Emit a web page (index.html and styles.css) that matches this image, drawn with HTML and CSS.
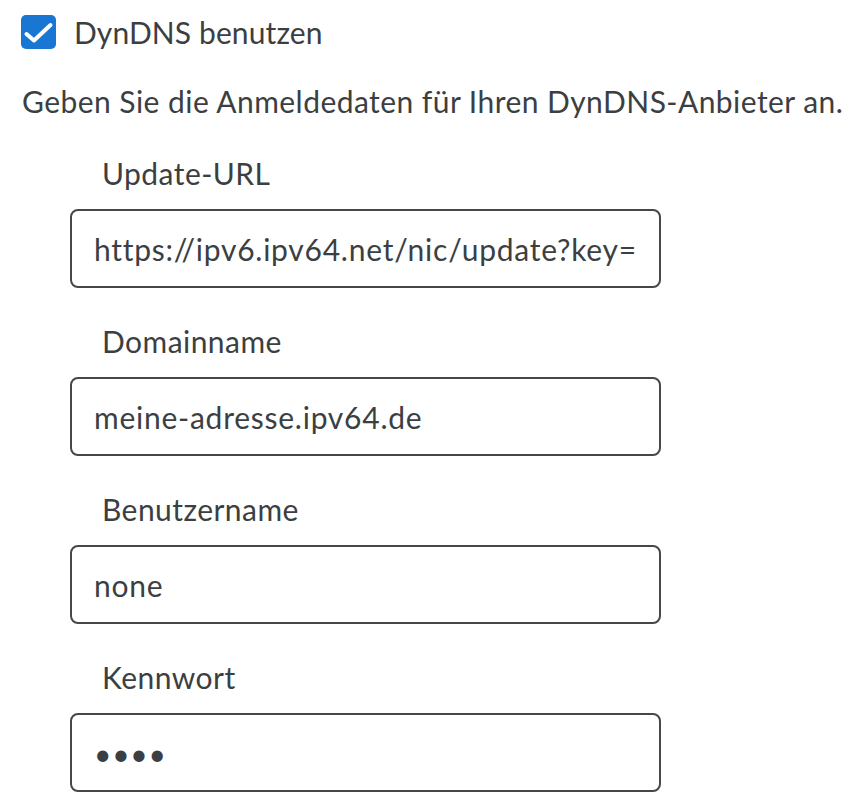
FILE: index.html
```html
<!DOCTYPE html>
<html lang="de">
<head>
    <meta charset="UTF-8">
    <meta name="viewport" content="width=device-width, initial-scale=1.0">
    <title>DynDNS</title>
    <link rel="stylesheet" href="styles.css">
</head>
<body>
    <div class="dyndns">
        <label class="check-row">
            <span class="check-box">
                <svg viewBox="0 0 35 34" width="35" height="34">
                    <path d="M5.5 19 L13 25.5 L29.5 10" fill="none" stroke="#fff" stroke-width="4" stroke-linecap="round" stroke-linejoin="round"/>
                </svg>
            </span>
            <span class="check-label">DynDNS benutzen</span>
        </label>

        <p class="hint">Geben Sie die Anmeldedaten für Ihren DynDNS-Anbieter an.</p>

        <div class="field">
            <label class="field-label" for="url">Update-URL</label>
            <input class="field-input" id="url" type="text" value="https://ipv6.ipv64.net/nic/update?key=abcdef">
        </div>

        <div class="field">
            <label class="field-label" for="domain">Domainname</label>
            <input class="field-input" id="domain" type="text" value="meine-adresse.ipv64.de">
        </div>

        <div class="field">
            <label class="field-label" for="user">Benutzername</label>
            <input class="field-input" id="user" type="text" value="none">
        </div>

        <div class="field">
            <label class="field-label" for="pass">Kennwort</label>
            <input class="field-input" id="pass" type="password" value="none">
        </div>
    </div>
</body>
</html>
```

FILE: styles.css
```css
body {
    margin: 0;
    padding: 15px 0 0 21px;
    background: #fff;
    font-family: Lato, "Noto Sans", sans-serif;
    font-size: 30px;
    letter-spacing: 0.45px;
    color: #3c3f42;
}

.check-row {
    display: flex;
    align-items: center;
    gap: 18px;
}

.check-box {
    width: 35px;
    height: 34px;
    border-radius: 5px;
    background: #1976d2;
    display: flex;
}

.check-label {
    line-height: 34px;
    letter-spacing: 0.1px;
}

.hint {
    margin: 34px 0 0 1px;
    line-height: 36px;
}

.field {
    margin-left: 49px;
}

.hint + .field {
    margin-top: 36px;
}

.field + .field {
    margin-top: 35px;
}

.field-label {
    display: block;
    padding-left: 32px;
    line-height: 36px;
    margin-bottom: 18px;
}

.field-input {
    box-sizing: border-box;
    width: 591px;
    height: 79px;
    padding: 0 24px 0 22px;
    border: 2px solid #45484b;
    border-radius: 8px;
    font-family: inherit;
    font-size: inherit;
    letter-spacing: 0.75px;
    color: #3c3f42;
    background: #fff;
    outline: none;
}
```
